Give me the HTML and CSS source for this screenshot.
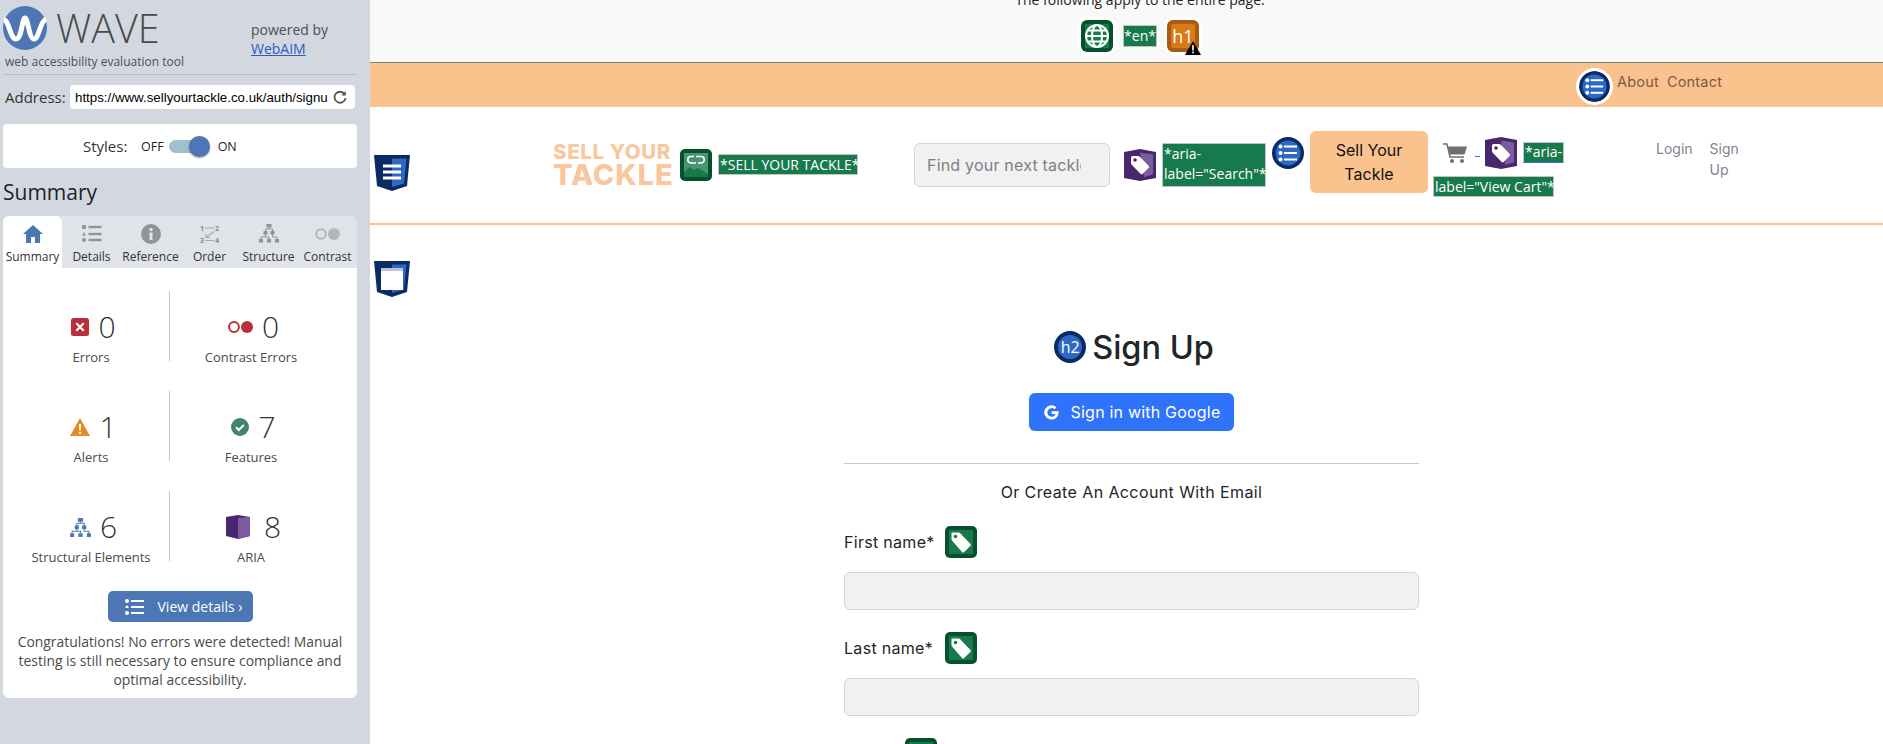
FILE: index.html
```html
<!DOCTYPE html>
<html lang="en">
<head>
    <meta charset="UTF-8">
    <title>WAVE - Sell Your Tackle</title>
    <link rel="stylesheet" href="styles.css">
</head>
<body>
    <!-- Icons used more than once -->
    <svg class="sprite">
        <symbol id="i-tag-green" viewBox="0 0 32 32">
            <rect width="32" height="32" rx="5" fill="#06502d"/>
            <rect x="4" y="4" width="24" height="24" fill="#187a4b"/>
            <path d="M7 6.500h6.500q1 0 1.700.8l10.300 10.700q.8.900 0 1.800l-6.500 6.400q-.9.800-1.800 0L7.400 15q-.9-.9-.9-2V7q0-.5.500-.5z" fill="#fff"/>
            <circle cx="10.500" cy="10.500" r="1.800" fill="#187a4b"/>
        </symbol>
        <symbol id="i-tag-purple" viewBox="0 0 32 32">
            <path d="M0 3 16 0l16 3v26l-16 3-16-3z" fill="#48276f"/>
            <path d="M16 3.500 29 5.500v20l-9 2.500z" fill="#7c5a9f"/>
            <path d="M7 8.500q0-1.500 1.500-1.500H14q1 0 1.800.8l9 9.200q.8.900 0 1.800l-6.300 6.300q-.9.800-1.800 0l-9-9.300Q7 15 7 14z" fill="#fff"/>
            <circle cx="11" cy="11" r="1.800" fill="#48276f"/>
        </symbol>
        <symbol id="i-list-blue" viewBox="0 0 32 32">
            <circle cx="16" cy="16" r="16" fill="#0d2b63"/>
            <circle cx="16" cy="16" r="12.500" fill="#2d68c4"/>
            <g fill="#fff">
                <circle cx="8.500" cy="9.500" r="2"/><circle cx="8.500" cy="16" r="2"/><circle cx="8.500" cy="22.500" r="2"/>
                <rect x="12" y="8.500" width="13" height="2"/><rect x="12" y="15" width="13" height="2"/><rect x="12" y="21.500" width="13" height="2"/>
            </g>
        </symbol>
    </svg>

    <aside class="wave">
        <div class="wave-head">
            <div class="wave-brand">
                <div class="wave-logo-row">
                    <svg class="wave-logo" viewBox="0 0 44 44">
                        <circle cx="22" cy="22" r="22" fill="#4c77b4"/>
                        <path d="M1 14C6 14 7 33 13 33S19 12 22 12 26 33 31 33 37 15 43 13" fill="none" stroke="#fff" stroke-width="5"/>
                    </svg>
                    <span class="wave-name">WAVE</span>
                </div>
                <div class="wave-tagline">web accessibility evaluation tool</div>
            </div>
            <div class="wave-powered">powered by<br><a href="#">WebAIM</a></div>
        </div>

        <div class="address-row">
            <label class="address-label">Address:</label>
            <div class="address-box">
                <span class="address-url">https://www.sellyourtackle.co.uk/auth/signu</span>
                <svg class="reload" viewBox="0 0 14 14"><path d="M11.500 4A5.500 5.500 0 1 0 12.500 8" fill="none" stroke="#555" stroke-width="1.800"/><path d="M12.800 1v4.500H8.300z" fill="#555"/></svg>
            </div>
        </div>

        <div class="styles-panel">
            <span class="styles-label">Styles:</span>
            <span class="styles-state">OFF</span>
            <span class="toggle"><span class="toggle-knob"></span></span>
            <span class="styles-state">ON</span>
        </div>

        <h2 class="summary-title">Summary</h2>

        <div class="tabs">
            <div class="tab active">
                <svg viewBox="0 0 20 20"><path d="M10 1 0 10h3v9h5v-6h4v6h5v-9h3z" fill="#4c77b4"/></svg>
                <span>Summary</span>
            </div>
            <div class="tab">
                <svg viewBox="0 0 20 20" fill="#8f949b"><rect x="0" y="1" width="4" height="4" rx="1"/><path d="M2 8l2 3.500H0z"/><circle cx="2" cy="16" r="2"/><rect x="6.500" y="1.800" width="13" height="2.400"/><rect x="6.500" y="8.800" width="13" height="2.400"/><rect x="6.500" y="14.800" width="13" height="2.400"/></svg>
                <span>Details</span>
            </div>
            <div class="tab">
                <svg viewBox="0 0 20 20"><circle cx="10" cy="10" r="10" fill="#8f949b"/><rect x="8.500" y="8.500" width="3" height="7.500" fill="#e0e3e8"/><circle cx="10" cy="5.500" r="1.800" fill="#e0e3e8"/></svg>
                <span>Reference</span>
            </div>
            <div class="tab">
                <svg class="tab-order" viewBox="0 0 20 20"><g fill="#85898f" font-family="Open Sans" font-size="7" font-weight="700"><text x="0" y="6.500">1</text><text x="15" y="6.500">2</text><text x="0" y="19">3</text><text x="15" y="19">4</text></g><path d="M5 4h9M5 16.500h9M14 7.500l-8 6M6 10v3.500h4" stroke="#a3a7ad" stroke-width="1.100" fill="none"/></svg>
                <span>Order</span>
            </div>
            <div class="tab">
                <svg viewBox="0 0 20 20" fill="#8f949b"><rect x="7.500" y="0" width="5" height="3.500"/><rect x="4.500" y="7" width="4" height="3.500"/><rect x="11.500" y="7" width="4" height="3.500"/><rect x="0" y="15" width="4" height="3.500"/><rect x="8" y="15" width="4" height="3.500"/><rect x="16" y="15" width="4" height="3.500"/><path d="M10 3v2H6.500v2M10 5h3.500v2M6.500 10v3H2v2M6.500 13H10v2M13.500 10v3H18v2" stroke="#8f949b" fill="none"/></svg>
                <span>Structure</span>
            </div>
            <div class="tab">
                <svg class="tab-wide" viewBox="0 0 25 12"><circle cx="6" cy="6" r="4.800" fill="none" stroke="#b3b6bb" stroke-width="2"/><circle cx="19" cy="6" r="6" fill="#b3b6bb"/></svg>
                <span>Contrast</span>
            </div>
        </div>

        <div class="summary-panel">
            <div class="stats">
                <div class="stat">
                    <div class="stat-top">
                        <svg class="stat-icon" width="18" height="18" viewBox="0 0 18 18"><rect width="18" height="18" rx="2.500" fill="#bb2f38"/><path d="M5.300 5.300l7.400 7.400M12.700 5.300l-7.400 7.400" stroke="#fff" stroke-width="2.200"/></svg>
                        <span class="stat-num">0</span>
                    </div>
                    <div class="stat-label">Errors</div>
                </div>
                <div class="stat stat-right">
                    <div class="stat-top">
                        <svg class="stat-icon" width="25" height="12" viewBox="0 0 25 12"><circle cx="6" cy="6" r="4.900" fill="none" stroke="#bb2f38" stroke-width="2"/><circle cx="19" cy="6" r="6" fill="#bb2f38"/></svg>
                        <span class="stat-num">0</span>
                    </div>
                    <div class="stat-label">Contrast Errors</div>
                </div>
                <div class="stat">
                    <div class="stat-top">
                        <svg class="stat-icon" width="20" height="18" viewBox="0 0 20 18"><path d="M10 0l10 18H0z" fill="#e58b25"/><rect x="9" y="6" width="2" height="6.500" fill="#fff"/><rect x="9" y="13.800" width="2" height="2" fill="#fff"/></svg>
                        <span class="stat-num">1</span>
                    </div>
                    <div class="stat-label">Alerts</div>
                </div>
                <div class="stat stat-right">
                    <div class="stat-top">
                        <svg class="stat-icon" width="18" height="18" viewBox="0 0 18 18"><circle cx="9" cy="9" r="9" fill="#40856a"/><path d="M5 9.300l2.800 2.700 5-5" fill="none" stroke="#fff" stroke-width="2"/></svg>
                        <span class="stat-num">7</span>
                    </div>
                    <div class="stat-label">Features</div>
                </div>
                <div class="stat">
                    <div class="stat-top">
                        <svg class="stat-icon" width="21" height="19" viewBox="0 0 20 18" fill="#4c77b4"><rect x="7.500" y="0" width="5" height="3.500"/><rect x="4.500" y="7" width="4" height="3.500"/><rect x="11.500" y="7" width="4" height="3.500"/><rect x="0" y="14.500" width="4" height="3.500"/><rect x="8" y="14.500" width="4" height="3.500"/><rect x="16" y="14.500" width="4" height="3.500"/><path d="M10 3v2H6.500v2M10 5h3.500v2M6.500 10v2.500H2v2M6.500 12.500H10v2M13.500 10v2.500H18v2" stroke="#4c77b4" fill="none"/></svg>
                        <span class="stat-num">6</span>
                    </div>
                    <div class="stat-label">Structural Elements</div>
                </div>
                <div class="stat stat-right">
                    <div class="stat-top stat-top-wide">
                        <svg class="stat-icon" width="24" height="24" viewBox="0 0 24 24"><path d="M0 2 12 0l12 2v19l-12 3-12-3z" fill="#48276f"/><path d="M12 3l12-1v19l-12 3z" fill="#7c5a9f"/></svg>
                        <span class="stat-num">8</span>
                    </div>
                    <div class="stat-label">ARIA</div>
                </div>
            </div>

            <a class="details-btn" href="#">
                <svg width="20" height="16" viewBox="0 0 20 16" fill="#fff"><circle cx="2" cy="2" r="2"/><path d="M2 6l2 3H0z"/><circle cx="2" cy="14" r="2"/><rect x="6" y="1" width="13" height="2"/><rect x="6" y="7" width="13" height="2"/><rect x="6" y="13" width="13" height="2"/></svg>
                <span>View details ›</span>
            </a>

            <p class="congrats">Congratulations! No errors were detected! Manual testing is still necessary to ensure compliance and optimal accessibility.</p>
        </div>
    </aside>

    <div class="page">
        <!-- Page level WAVE icons -->
        <div class="page-icons">
            <p class="page-note">The following apply to the entire page.</p>
            <div class="page-icon-row">
                <svg class="icon halo" viewBox="0 0 32 32">
                    <rect width="32" height="32" rx="5" fill="#06502d"/>
                    <rect x="4" y="4" width="24" height="24" fill="#187a4b"/>
                    <g fill="none" stroke="#fff" stroke-width="2">
                        <circle cx="16" cy="16" r="11"/>
                        <ellipse cx="16" cy="16" rx="5" ry="11"/>
                        <path d="M5 16h22M7 10.500h18M7 21.500h18"/>
                    </g>
                </svg>
                <span class="wave-text">*en*</span>
                <div class="heading-one">h1
                    <svg class="warn" viewBox="0 0 16 14"><path d="M8 0l8 14H0z" fill="#000"/><rect x="7.200" y="4" width="1.600" height="5.500" fill="#fff"/><rect x="7.200" y="10.500" width="1.600" height="1.700" fill="#fff"/></svg>
                </div>
            </div>
        </div>

        <div class="topbar">
            <svg class="icon-list-halo"><use href="#i-list-blue"/></svg>
            <a class="topbar-link" href="#">About</a>
            <a class="topbar-link" href="#">Contact</a>
        </div>

        <nav class="navbar">
            <svg class="shield nav-shield" viewBox="0 0 36 36">
                <path d="M0 0h36l-3 31-15 5-15-5z" fill="#0d2b63"/>
                <path d="M18 3.500h14.500L30 28.500l-12 3.500z" fill="#2d68c4"/>
                <rect x="9" y="9.500" width="18" height="3" fill="#fff"/><rect x="9" y="15.500" width="18" height="3" fill="#fff"/><rect x="9" y="21.500" width="18" height="3" fill="#fff"/>
            </svg>

            <div class="brand">
                <div class="brand-top">SELL YOUR</div>
                <div class="brand-bottom">TACKLE</div>
            </div>
            <svg class="icon brand-icon" viewBox="0 0 32 32">
                <rect width="32" height="32" rx="5" fill="#06502d"/>
                <rect x="4" y="4" width="24" height="24" fill="#4a9472"/>
                <path d="M4 28V23l6-5 4 3 4-2 10 6v3z" fill="#187a4b"/>
                <g fill="none" stroke="#fff" stroke-width="1.600">
                    <path d="M14 7.500H11a3 3 0 0 0 0 6.500h5"/>
                    <path d="M18 14h3a3 3 0 0 0 0-6.500h-5"/>
                </g>
            </svg>
            <span class="wave-text brand-text">*SELL YOUR TACKLE*</span>

            <input class="search" type="text" placeholder="Find your next tackle">
            <svg class="icon search-tag"><use href="#i-tag-purple"/></svg>
            <span class="wave-text search-text">*aria-label="Search"*</span>
            <svg class="icon list-icon"><use href="#i-list-blue"/></svg>
            <a class="sell-btn" href="#">Sell Your Tackle</a>

            <div class="cart">
                <div class="cart-row">
                    <svg class="cart-icon" viewBox="0 0 24 20">
                        <path d="M0 1h4l3 13h14" fill="none" stroke="#6f6f6f" stroke-width="1.500"/>
                        <path d="M5 3.500h19l-2.500 8H7z" fill="#6f6f6f"/>
                        <circle cx="9" cy="18" r="2" fill="#6f6f6f"/><circle cx="19" cy="18" r="2" fill="#6f6f6f"/>
                    </svg>
                    <span class="cart-dash"></span>
                    <svg class="icon"><use href="#i-tag-purple"/></svg>
                    <span class="wave-text cart-text">*aria-</span>
                </div>
                <span class="wave-text cart-text-two">label="View Cart"*</span>
            </div>

            <a class="nav-link login" href="#">Login</a>
            <a class="nav-link signup" href="#">Sign Up</a>
        </nav>

        <main class="content">
            <svg class="shield" viewBox="0 0 36 36">
                <path d="M0 0h36l-3 31-15 5-15-5z" fill="#0d2b63"/>
                <path d="M18 3.500h14.500L30 28.500l-12 3.500z" fill="#2d68c4"/>
                <rect x="7" y="7" width="22" height="22" fill="#fff"/>
                <rect x="7" y="7" width="22" height="3" fill="#bcc4d2"/>
            </svg>

            <div class="form-wrap">
                <h1 class="form-title"><span class="heading-two">h2</span>Sign Up</h1>
                <a class="google-btn" href="#">
                    <svg width="17" height="17" viewBox="0 0 17 17"><path d="M15.500 7.200H8.700v2.700h4a4.300 4.300 0 1 1-1.200-4.700l2-2A7.200 7.200 0 1 0 15.700 8.500c0-.5 0-.9-.2-1.300z" fill="#fff"/></svg>
                    <span>Sign in with Google</span>
                </a>
                <hr class="divider">
                <p class="or-text">Or Create An Account With Email</p>

                <div class="field-label">
                    <label>First name*</label>
                    <svg class="icon"><use href="#i-tag-green"/></svg>
                </div>
                <input class="field" type="text">

                <div class="field-label">
                    <label>Last name*</label>
                    <svg class="icon"><use href="#i-tag-green"/></svg>
                </div>
                <input class="field" type="text">

                <div class="field-label field-label-short">
                    <svg class="icon"><use href="#i-tag-green"/></svg>
                </div>
            </div>
        </main>
    </div>
</body>
</html>
```

FILE: styles.css
```css
/* Basic reset */
* {
    margin: 0;
    padding: 0;
    box-sizing: border-box;
}

html, body {
    height: 744px;
    overflow: hidden;
}

body {
    display: flex;
    font-family: "Open Sans", sans-serif;
    color: #444;
    background-color: #fff;
}

.sprite {
    display: none;
}

/* WAVE sidebar */
.wave {
    width: 370px;
    flex-shrink: 0;
    height: 744px;
    padding: 6px 13px 0 3px;
    background-color: #d3d8e0;
}

.wave-head {
    display: flex;
    height: 69px;
    border-bottom: 1px solid #b9bdc3;
}

.wave-brand {
    width: 248px;
}

.wave-logo-row {
    display: flex;
    align-items: center;
    height: 44px;
}

.wave-logo {
    width: 44px;
    height: 44px;
}

.wave-name {
    margin-left: 9px;
    font-size: 39.500px;
    font-weight: 300;
    color: #4a4a4a;
}

.wave-tagline {
    margin: 4px 0 0 2px;
    font-size: 12px;
    line-height: 16px;
    color: #4f4f4f;
}

.wave-powered {
    padding-top: 14px;
    font-size: 14px;
    line-height: 19px;
    color: #4f4f4f;
}

.wave-powered a {
    color: #2a5bc9;
}

.address-row {
    display: flex;
    align-items: center;
    height: 24px;
    margin-top: 10px;
}

.address-label {
    width: 67px;
    padding-left: 2px;
    font-size: 15px;
    color: #333;
}

.address-box {
    display: flex;
    align-items: center;
    justify-content: space-between;
    width: 285px;
    height: 24px;
    padding: 0 8px 0 5px;
    background-color: #fff;
    border-radius: 4px;
}

.address-url {
    font-family: "Liberation Sans", Arial, sans-serif;
    font-size: 13.3px;
    color: #000;
    white-space: nowrap;
}

.reload {
    width: 14px;
    height: 14px;
}

.styles-panel {
    display: flex;
    align-items: center;
    height: 44px;
    margin-top: 15px;
    padding-left: 80px;
    background-color: #fff;
    border-radius: 4px;
}

.styles-label {
    width: 58px;
    font-size: 15px;
    color: #333;
}

.styles-state {
    font-size: 12.5px;
    color: #222;
}

.toggle {
    position: relative;
    width: 36px;
    height: 13px;
    margin: 0 13px 0 5px;
    background-color: #9fc0cc;
    border-radius: 7px;
}

.toggle-knob {
    position: absolute;
    right: -5px;
    top: -4px;
    width: 21px;
    height: 21px;
    background-color: #4c77b4;
    border-radius: 50%;
    box-shadow: 0 1px 2px rgba(0, 0, 0, 0.4);
}

.summary-title {
    margin-top: 10px;
    font-size: 21px;
    font-weight: 400;
    line-height: 28px;
    color: #222;
}

.tabs {
    display: grid;
    grid-template-columns: repeat(6, 59px);
    height: 52px;
    margin-top: 10px;
    background-color: #e0e3e8;
    border-radius: 6px 6px 0 0;
}

.tab {
    display: flex;
    flex-direction: column;
    align-items: center;
    padding-top: 8px;
    font-size: 12px;
    color: #333;
    white-space: nowrap;
}

.tab svg {
    width: 20px;
    height: 20px;
}

.tab svg.tab-wide {
    width: 25px;
}

.tab svg.tab-order {
    overflow: visible;
}

.tab span {
    margin-top: 5px;
    line-height: 16px;
}

.tab.active {
    background-color: #fff;
    border-radius: 6px 6px 0 0;
}

.summary-panel {
    height: 430px;
    padding-top: 23px;
    background-color: #fff;
    border-radius: 0 0 6px 6px;
}

.stats {
    display: grid;
    grid-template-columns: 156px 163px;
    row-gap: 30px;
    margin-left: 10px;
}

.stat {
    height: 70px;
    padding-top: 21px;
    text-align: center;
}

.stat-right {
    border-left: 1px solid #c9c9c9;
}

.stat-top {
    display: flex;
    align-items: center;
    justify-content: center;
    gap: 9px;
    height: 30px;
    padding-left: 5px;
}

.stat-top-wide {
    gap: 14px;
}

.stat-num {
    font-size: 30px;
    font-weight: 300;
    line-height: 30px;
    color: #333;
}

.stat-label {
    margin-top: 7px;
    font-size: 13px;
    line-height: 16px;
    color: #4a4a4a;
    white-space: nowrap;
}

.details-btn {
    display: flex;
    align-items: center;
    width: 145px;
    height: 31px;
    margin: 30px auto 0;
    padding-left: 17px;
    gap: 13px;
    color: #fff;
    font-size: 14px;
    text-decoration: none;
    background-color: #4c77b4;
    border-radius: 5px;
}

.congrats {
    margin-top: 10px;
    padding: 0 8px;
    font-size: 13.900px;
    line-height: 19px;
    text-align: center;
    color: #4a4a4a;
}

/* The evaluated page */
.page {
    flex: 1;
    font-family: Inter, sans-serif;
    color: #212529;
}

.page-icons {
    height: 63px;
    background-color: #f9f9f9;
    border-bottom: 1px solid #6f8a7c;
    text-align: center;
    overflow: hidden;
}

.page-note {
    margin-top: -10px;
    padding-left: 27px;
    font-family: "Open Sans", sans-serif;
    font-size: 14px;
    line-height: 20px;
    color: #222;
}

.page-icon-row {
    display: flex;
    align-items: center;
    justify-content: flex-start;
    height: 32px;
    margin: 10px 0 0 711px;
}

.icon {
    display: block;
    width: 32px;
    height: 32px;
    flex-shrink: 0;
}

.halo {
    border-radius: 6px;
    box-shadow: 0 0 0 3px #fff;
}

.wave-text {
    display: inline-block;
    padding: 0 1px;
    font-family: "Open Sans", sans-serif;
    font-size: 14px;
    line-height: 20px;
    color: #fff;
    background-color: #177a4c;
    border: 1px solid #c4c4c4;
    white-space: nowrap;
}

.page-icon-row .wave-text {
    margin: 0 10px;
    padding: 0;
    width: 34px;
}

.heading-one {
    position: relative;
    width: 32px;
    height: 32px;
    font-family: "Open Sans", sans-serif;
    font-size: 18px;
    line-height: 24px;
    color: #fff;
    background-color: #d97a16;
    border: 4px solid #a85c10;
    border-radius: 6px;
    box-shadow: 0 0 0 3px #fff;
}

.warn {
    position: absolute;
    right: -6px;
    bottom: -7px;
    width: 16px;
    height: 14px;
}

.topbar {
    display: flex;
    align-items: center;
    height: 44px;
    padding-left: 1206px;
    background-color: #fac28d;
}

.icon-list-halo {
    width: 37px;
    height: 37px;
    margin-top: 3px;
    background-color: #fff;
    border-radius: 50%;
    padding: 3px;
}

.topbar-link {
    margin: 0 4px 8px;
    font-size: 14.500px;
    letter-spacing: 0.2px;
    color: #7c5a48;
    text-decoration: none;
}

.navbar {
    display: flex;
    align-items: flex-start;
    height: 118px;
    padding-left: 4px;
    background-color: #fff;
    border-bottom: 2px solid #fac28d;
}

.shield {
    display: block;
    width: 36px;
    height: 36px;
}

.nav-shield {
    margin-top: 48px;
}

.brand {
    width: 119px;
    margin: 36px 0 0 143px;
    font-family: Inter, sans-serif;
    font-weight: 800;
    color: #f9c79d;
    white-space: nowrap;
}

.brand-top {
    font-size: 20.500px;
    line-height: 18px;
    letter-spacing: 0.6px;
}

.brand-bottom {
    font-size: 29px;
    line-height: 28px;
    letter-spacing: 0.9px;
}

.brand-icon {
    margin: 42px 0 0 8px;
}

.brand-text {
    width: 140px;
    height: 21px;
    margin: 47px 0 0 6px;
    line-height: 19px;
}

.search {
    width: 196px;
    height: 44px;
    margin: 36px 0 0 56px;
    padding: 0 28px 0 12px;
    font-family: Inter, sans-serif;
    font-size: 16px;
    letter-spacing: 0.2px;
    background-color: #f1f1f1;
    border: 1px solid #d0d5dc;
    border-radius: 6px;
}

.search::placeholder {
    color: #7a7f88;
}

.search-tag {
    margin: 42px 0 0 14px;
}

.search-text {
    width: 104px;
    height: 44px;
    margin: 36px 0 0 6px;
    white-space: normal;
}

.list-icon {
    margin: 30px 0 0 6px;
}

.sell-btn {
    display: block;
    width: 118px;
    height: 62px;
    margin: 24px 0 0 6px;
    padding: 7px 8px;
    font-size: 16px;
    line-height: 24px;
    text-align: center;
    color: #111;
    text-decoration: none;
    background-color: #fac28d;
    border-radius: 6px;
}

.cart {
    width: 150px;
    margin: 30px 0 0 5px;
}

.cart-row {
    display: flex;
    align-items: center;
    height: 32px;
    padding-left: 10px;
}

.cart-icon {
    width: 24px;
    height: 20px;
}

.cart-dash {
    width: 5px;
    height: 1px;
    margin: 6px 5px 0 8px;
    background-color: #2f73fb;
}

.cart-text {
    margin: -2px 0 0 6px;
    height: 21px;
    line-height: 18px;
    border-bottom-color: #2f73fb;
}

.cart-text-two {
    display: block;
    width: 121px;
    height: 21px;
    margin-top: 7px;
    line-height: 19px;
}

.nav-link {
    font-size: 14px;
    line-height: 21px;
    color: #7f8590;
    text-decoration: none;
}

.login {
    margin: 31px 0 0 73px;
}

.signup {
    width: 34px;
    margin: 31px 0 0 17px;
}

.content {
    height: 519px;
    padding: 36px 0 0 4px;
    overflow: hidden;
}

.form-wrap {
    width: 575px;
    margin: 34px 0 0 470px;
}

.form-title {
    display: flex;
    align-items: center;
    justify-content: center;
    gap: 6px;
    height: 32px;
    padding-left: 5px;
    font-size: 32.500px;
    font-weight: 500;
    color: #212529;
}

.heading-two {
    width: 32px;
    height: 32px;
    font-family: "Open Sans", sans-serif;
    font-size: 16px;
    font-weight: 400;
    line-height: 24px;
    text-align: center;
    color: #fff;
    background-color: #2d68c4;
    border: 4px solid #0d2b63;
    border-radius: 50%;
}

.google-btn {
    display: flex;
    align-items: center;
    justify-content: center;
    gap: 11px;
    width: 205px;
    height: 38px;
    margin: 30px auto 0;
    font-size: 16px;
    letter-spacing: 0.2px;
    color: #fff;
    text-decoration: none;
    background-color: #2f73fb;
    border-radius: 6px;
}

.divider {
    margin-top: 32px;
    border: none;
    border-top: 1px solid #c8c8c8;
}

.or-text {
    margin-top: 16px;
    font-size: 16px;
    letter-spacing: 0.4px;
    line-height: 24px;
    text-align: center;
}

.field-label {
    display: flex;
    align-items: center;
    gap: 10px;
    height: 32px;
    margin-top: 22px;
    font-size: 16px;
    letter-spacing: 0.3px;
}

.field-label label {
    min-width: 91px;
}

.field-label-short {
    padding-left: 61px;
}

.field {
    display: block;
    width: 100%;
    height: 38px;
    margin-top: 14px;
    background-color: #f1f1f1;
    border: 1px solid #d0d5dc;
    border-radius: 6px;
}
```
